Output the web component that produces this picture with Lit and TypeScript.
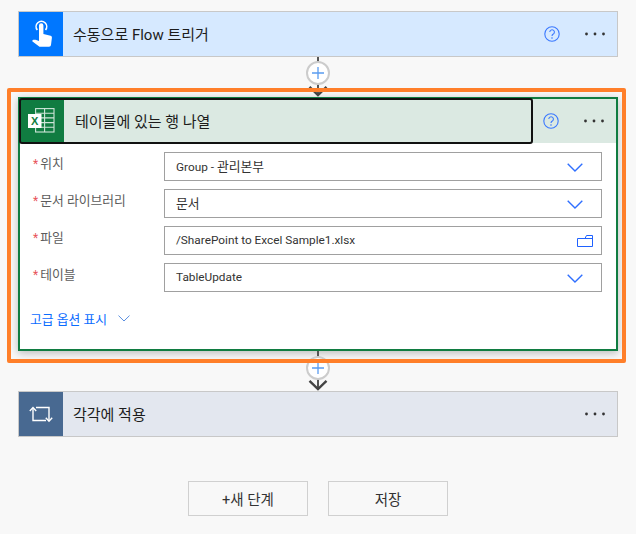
import { LitElement, html, css, svg } from "lit";
import { customElement } from "lit/decorators.js";

const chevron = svg`<svg class="chev" width="16" height="9" viewBox="0 0 16 9"><path d="M.7 .8 L8 8 L15.3 .8" fill="none" stroke="#2f6fff" stroke-width="1.4"/></svg>`;
const help = svg`<svg class="help" width="16" height="16" viewBox="0 0 16 16"><circle cx="8" cy="8" r="7.2" fill="none" stroke="#3a78ff" stroke-width="1.1"/><path d="M5.8 6.1 a2.3 2.3 0 1 1 3.5 2 c-.9.5-1.3 1-1.3 2" fill="none" stroke="#3a78ff" stroke-width="1.1"/><circle cx="8" cy="12" r=".8" fill="#3a78ff"/></svg>`;
const dots = svg`<svg class="dots" width="20" height="4" viewBox="0 0 20 4"><circle cx="1.5" cy="2" r="1.4" fill="#333"/><circle cx="10" cy="2" r="1.4" fill="#333"/><circle cx="18.5" cy="2" r="1.4" fill="#333"/></svg>`;
const touch = svg`<svg width="44" height="44" viewBox="0 0 44 44"><path d="M18.3 18 a5.3 5.3 0 1 1 8.2 0" fill="none" stroke="#fff" stroke-width="1.6"/><path d="M20 13.5 a2.2 2.2 0 0 1 4.4 0 V22 l7.2 1.8 c.9.3 1.4 1 1.3 2 L32 33 a2 2 0 0 1 -2 1.8 H20.5 L13.5 29.5 c-.5-.6 0-1.8 1-1.8 h2 L20 29 z" fill="#fff"/></svg>`;
const excel = svg`<svg width="44" height="44" viewBox="0 0 44 44"><g fill="none" stroke="#fff" stroke-width="1.1" opacity=".8"><rect x="15.6" y="9.6" width="18.4" height="23.4"/><path d="M24.6 9.6 V33 M15.6 14.2 H34 M15.6 18.9 H34 M15.6 23.6 H34 M15.6 28.3 H34"/></g><rect x="8" y="15" width="13.5" height="14" fill="#fff"/><text x="14.7" y="26" text-anchor="middle" class="x">X</text></svg>`;
const loop = svg`<svg width="44" height="44" viewBox="0 0 44 44"><g fill="none" stroke="#fff" stroke-width="1.4"><path d="M14 16 V28.5 H27"/><path d="M17 15.5 H30 V29"/><path d="M10.8 19 L14 15.6 L17.2 19"/><path d="M26.8 25.8 L30 29.2 L33.2 25.8"/></g></svg>`;
const folder = svg`<svg width="16" height="12" viewBox="0 0 16 12"><path d="M.5 3.5 H8 L9.5 .5 H15.5 V11.5 H.5 Z M8 3.5 H15.5" fill="none" stroke="#1f62ff" stroke-width="1"/></svg>`;

@customElement("app-root")
export class AppRoot extends LitElement {
  static styles = css`
    :host {
      display: block;
      width: 636px;
      height: 534px;
      overflow: hidden;
      box-sizing: border-box;
      padding-top: 11px;
      background: #f8f8f8;
      font-family: Roboto, "Noto Sans CJK KR", sans-serif;
      color: #222;
    }
    .card {
      box-sizing: border-box;
      width: 600px;
      margin-left: 18px;
      border: 1px solid #c8c8c8;
    }
    .head { display: flex; align-items: center; height: 44px; }
    .icon { width: 44px; height: 44px; flex: none; }
    .title {
      flex: 1;
      padding: 1px 0 0 10px;
      font-size: 15px;
      line-height: 20px;
      color: #1c1c1c;
    }
    .help { display: block; margin-right: 25px; }
    .dots { display: block; margin-right: 12px; }

    .trigger .head { background: #d6e9ff; }
    .trigger .icon { background: #0077ff; }
    .apply .head { background: #e3e7ef; }
    .apply .icon { background: #486991; }

    .focused {
      position: relative;
      border: 2px solid #107c41;
      background: #fff;
      box-shadow: 0 2px 8px rgba(0, 0, 0, 0.25);
    }
    .focused::before {
      content: "";
      position: absolute;
      left: -13px;
      right: -10px;
      top: -11px;
      bottom: -14px;
      border: 4px solid #ff7f2a;
      border-radius: 2px;
      z-index: 2;
      pointer-events: none;
    }
    .focused .head { background: #dbe9e2; }
    .focused .icon { background: #107c41; }
    .main {
      position: relative;
      display: flex;
      align-items: center;
      width: 512px;
      height: 44px;
      flex: none;
    }
    .main::after {
      content: "";
      position: absolute;
      inset: -1px;
      border: 2px solid #111;
      border-radius: 3px;
    }
    .main .title { padding-left: 11px; }
    .focused .head .spacer { flex: 1; }
    .x { font: bold 11px "Liberation Sans", sans-serif; fill: #107c41; }

    .body { padding: 9px 14px 23px 13px; }
    .rows { display: grid; grid-template-columns: 131px 1fr; grid-auto-rows: 29px; row-gap: 8px; }
    .label {
      display: flex;
      gap: 2px;
      font-size: 12.8px;
      line-height: 16px;
      padding-top: 4px;
      color: #5c5c5c;
    }
    .star { color: #e8545a; font-size: 12px; }
    .input {
      box-sizing: border-box;
      display: flex;
      align-items: center;
      justify-content: space-between;
      border: 1px solid #a0a0a0;
      padding: 0 8px 2px 11px;
      font-size: 11.8px;
      color: #333;
    }
    .ko { font-size: 12.8px; }
    .input .chev { margin-right: 10px; margin-top: 3px; }
    .input svg:not(.chev) { margin-top: 2px; }
    .adv {
      display: flex;
      align-items: center;
      gap: 11px;
      height: 16px;
      margin: 18px 0 0 -3px;
      font-size: 12.8px;
      color: #0a6cff;
    }
    .adv svg { display: block; }

    .conn { position: relative; height: 40px; z-index: 1; }
    .line {
      position: absolute;
      left: 317px;
      top: 0;
      bottom: 2px;
      width: 2px;
      background: #555;
    }
    .plus {
      position: absolute;
      left: 306px;
      width: 24px;
      height: 24px;
      box-sizing: border-box;
      border: 2px solid #ccc;
      border-radius: 50%;
      background: #fff;
      top: 4px;
    }
    .plus.low { top: 5px; }
    .plus svg { display: block; margin: 3px; }
    .arrow { position: absolute; left: 308px; bottom: 0; display: block; }

    .actions { display: flex; gap: 20px; margin: 44px 0 0 188px; }
    .btn {
      box-sizing: border-box;
      width: 120px;
      height: 35px;
      display: flex;
      align-items: center;
      justify-content: center;
      border: 1px solid #d0d0d0;
      font-size: 14.5px;
      color: #333;
    }
  `;

  private conn(low: boolean) {
    return html`<div class="conn">
      <div class="line"></div>
      <svg class="arrow" width="20" height="12" viewBox="0 0 20 12"><path d="M1.5 1.8 L10 10 L18.5 1.8" fill="none" stroke="#444" stroke-width="2.4"/></svg>
      <div class="plus ${low ? "low" : ""}">
        <svg width="14" height="14" viewBox="0 0 14 14"><path d="M7 1 V13 M1 7 H13" stroke="#5a9cf0" stroke-width="1.3"/></svg>
      </div>
    </div>`;
  }

  private row(label: string, value: unknown, folderIcon = false) {
    return html`<div class="label"><span class="star">*</span><span>${label}</span></div>
      <div class="input"><span>${value}</span>${folderIcon ? folder : chevron}</div>`;
  }

  render() {
    return html`
      <div class="card trigger">
        <div class="head">
          <div class="icon">${touch}</div>
          <div class="title">수동으로 Flow 트리거</div>
          ${help}${dots}
        </div>
      </div>
      ${this.conn(false)}
      <div class="card focused">
        <div class="head">
          <div class="main">
            <div class="icon">${excel}</div>
            <div class="title">테이블에 있는 행 나열</div>
          </div>
          <div class="spacer"></div>
          ${help}${dots}
        </div>
        <div class="body">
          <div class="rows">
            ${this.row("위치", html`Group - <span class="ko">관리본부</span>`)}
            ${this.row("문서 라이브러리", html`<span class="ko">문서</span>`)}
            ${this.row("파일", "/SharePoint to Excel Sample1.xlsx", true)}
            ${this.row("테이블", "TableUpdate")}
          </div>
          <div class="adv"><span>고급 옵션 표시</span>
            <svg width="12" height="7" viewBox="0 0 12 7"><path d="M.5 .6 L6 6 L11.5 .6" fill="none" stroke="#5a8fe0" stroke-width="1"/></svg>
          </div>
        </div>
      </div>
      ${this.conn(true)}
      <div class="card apply">
        <div class="head">
          <div class="icon">${loop}</div>
          <div class="title">각각에 적용</div>
          ${dots}
        </div>
      </div>
      <div class="actions">
        <div class="btn">+새 단계</div>
        <div class="btn">저장</div>
      </div>
    `;
  }
}
